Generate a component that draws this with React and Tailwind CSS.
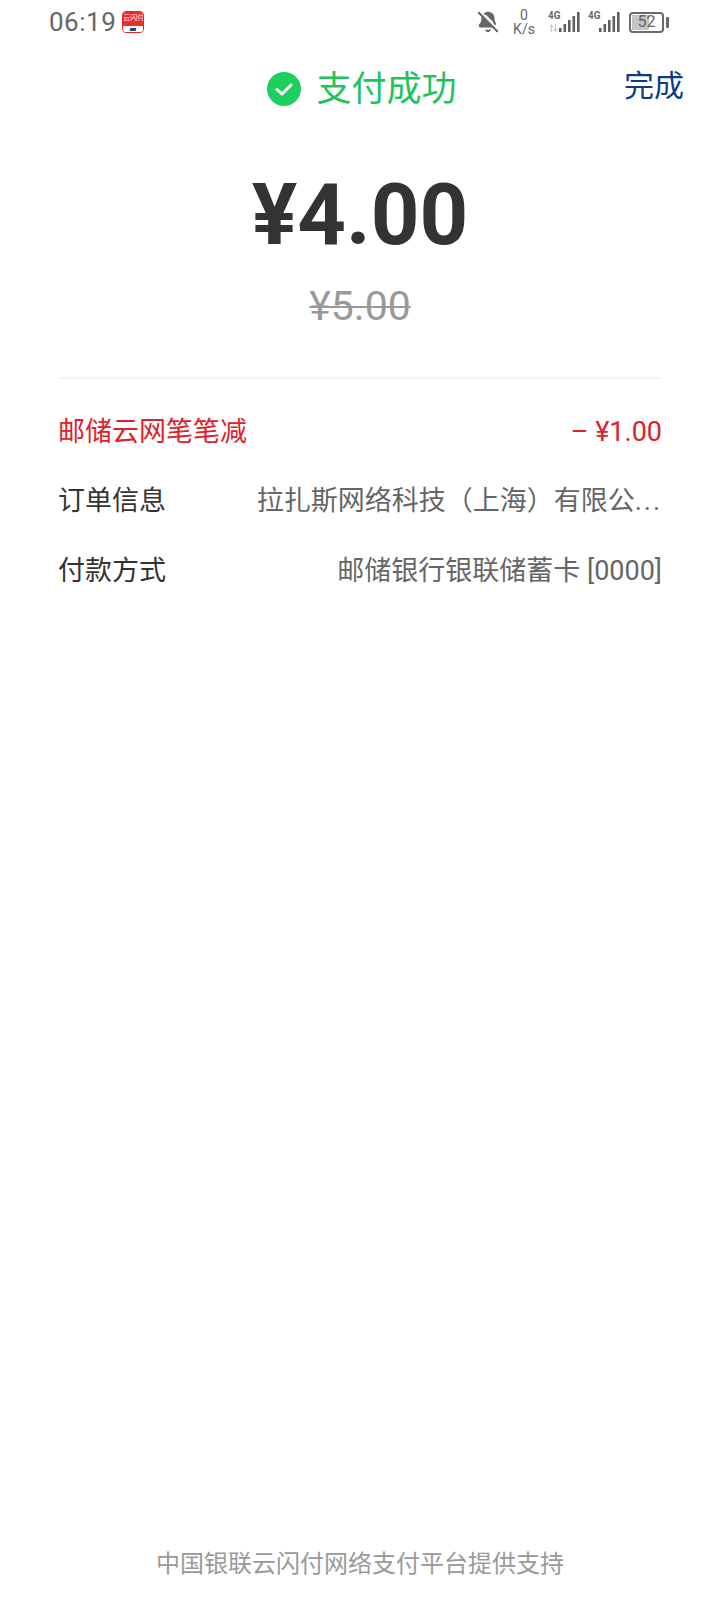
import { BellOff } from 'lucide-react'

const cjk = "font-['Roboto','Noto_Sans_CJK_SC',sans-serif]"

function Signal({ arrows }) {
  return (
    <div className="relative w-[32px] h-[22px]">
      <span className="absolute left-0 top-[-1px] text-[11px] leading-[11px] font-bold font-['Roboto',sans-serif] scale-x-90 origin-left">4G</span>
      {arrows && (
        <svg width="10" height="8" viewBox="0 0 10 8" className="absolute left-[1px] top-[13px]">
          <path d="M2.5 8V1M1 3l1.5-2L4 3M6.5 0v7M5 5l1.5 2L8 5" fill="none" stroke="#c8c8c8" strokeWidth="1.2" />
        </svg>
      )}
      <svg width="21" height="21" viewBox="0 0 21 21" className="absolute left-[11px] top-0">
        {[4, 8, 12, 16, 20].map((h, i) => (
          <rect key={i} x={i * 4.5} y={21 - h} width="2.6" height={h} fill="#5f5f5f" />
        ))}
      </svg>
    </div>
  )
}

function StatusBar() {
  return (
    <div className="h-[44px] flex items-center justify-between pl-[49px] pr-[51px] text-[#666]">
      <div className="flex items-center gap-[6px]">
        <span className="text-[26px] leading-none font-['Roboto',sans-serif] tracking-[0.5px]">06:19</span>
        <div className="w-[22px] h-[22px] rounded-[4px] border border-[#e8262a] overflow-hidden flex flex-col">
          <div className="h-[14px] bg-[#ee2a2a] text-white text-[7px] leading-[10px] text-center font-['Noto_Sans_CJK_SC',sans-serif] whitespace-nowrap overflow-hidden">云闪付</div>
          <div className="flex-1 bg-white flex items-center justify-center">
            <div className="w-[6px] h-[3px] bg-[#1c4a7a] -skew-x-12" />
          </div>
        </div>
      </div>
      <div className="flex items-center">
        <BellOff size={22} fill="#666" strokeWidth={2.2} className="text-[#666]" />
        <div className="w-[24px] ml-[13px] flex flex-col items-center text-[14px] leading-[14px] font-['Roboto',sans-serif]">
          <span>0</span>
          <span>K/s</span>
        </div>
        <div className="ml-[12px]">
          <Signal arrows />
        </div>
        <div className="ml-[8px]">
          <Signal />
        </div>
        <div className="ml-[9px] flex items-center">
          <div className="relative w-[35px] h-[21px] border-2 border-[#6a6a6a] rounded-[4px] overflow-hidden flex items-center justify-center">
            <div className="absolute left-[1px] top-[1px] bottom-[1px] w-[17px] bg-[#c4c4c4]" />
            <span className="relative text-[16px] leading-none font-['Roboto',sans-serif]">52</span>
          </div>
          <div className="ml-[2px] w-[3px] h-[11px] bg-[#6a6a6a] rounded-[1px]" />
        </div>
      </div>
    </div>
  )
}

function Row({ label, value, red }) {
  return (
    <div className={`flex justify-between items-center h-[69.5px] text-[27px] ${red ? 'text-[#e0202a]' : 'text-[#333]'}`}>
      <span className="shrink-0">{label}</span>
      <span className={`whitespace-nowrap ${red ? '' : 'text-[#666]'}`}>{value}</span>
    </div>
  )
}

export default function App() {
  return (
    <div className={`relative w-[720px] h-[1600px] bg-white ${cjk}`}>
      <StatusBar />

      <div className="relative h-[90px] flex items-center justify-center">
        <div className="flex items-center gap-[15px] ml-[4px]">
          <svg width="34" height="34" viewBox="0 0 34 34">
            <circle cx="17" cy="17" r="17" fill="#1dd05d" />
            <path d="M10 17.5l5 4.5 9-9" fill="none" stroke="#fff" strokeWidth="3" strokeLinecap="round" strokeLinejoin="round" />
          </svg>
          <span className="text-[35px] leading-none text-[#1fc35c]">支付成功</span>
        </div>
        <span className="absolute right-[36px] top-[27px] text-[30px] leading-none text-[#0c3b84]">完成</span>
      </div>

      <div className="mt-[33px] text-center font-['Roboto',sans-serif] font-bold text-[85px] leading-[96px] text-[#333]">¥4.00</div>
      <div className="mt-[18px] text-center font-['Roboto',sans-serif] text-[41px] leading-[50px] text-[#999] line-through decoration-2">¥5.00</div>

      <div className="mx-[58px] mt-[46px] border-t-2 border-[#f3f3f3] pt-[18px]">
        <Row label="邮储云网笔笔减" value="– ¥1.00" red />
        <Row label="订单信息" value={<>拉扎斯网络科技（上海）有限公<span className="tracking-[2px]">...</span></>} />
        <Row label="付款方式" value="邮储银行银联储蓄卡 [0000]" />
      </div>

      <div className="absolute inset-x-0 bottom-[20px] text-center text-[24px] leading-[32px] text-[#999]">中国银联云闪付网络支付平台提供支持</div>
    </div>
  )
}
